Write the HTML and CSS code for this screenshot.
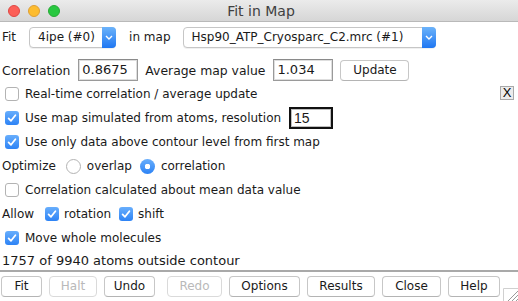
FILE: index.html
```html
<!DOCTYPE html>
<html>
<head>
<meta charset="utf-8">
<link rel="stylesheet" href="styles.css">
</head>
<body>
<div class="window">
  <div class="titlebar">
    <div class="lights">
      <span class="light red"></span>
      <span class="light yellow"></span>
      <span class="light green"></span>
    </div>
    <div class="title">Fit in Map</div>
  </div>

  <div class="content">
    <div class="row r1">
      <span class="lbl">Fit</span>
      <div class="popup p1"><span class="ptext">4ipe (#0)</span><span class="parrow"><svg width="8" height="5" viewBox="0 0 8 5"><polyline points="1,1 4,4 7,1" fill="none" stroke="#fff" stroke-width="1.4"/></svg></span></div>
      <span class="lbl inmap">in map</span>
      <div class="popup p2"><span class="ptext">Hsp90_ATP_Cryosparc_C2.mrc (#1)</span><span class="parrow"><svg width="8" height="5" viewBox="0 0 8 5"><polyline points="1,1 4,4 7,1" fill="none" stroke="#fff" stroke-width="1.4"/></svg></span></div>
    </div>

    <div class="row r2">
      <span class="lbl">Correlation</span>
      <div class="entry e1">0.8675</div>
      <span class="lbl avg">Average map value</span>
      <div class="entry e2">1.034</div>
      <div class="btn upd">Update</div>
    </div>

    <div class="row">
      <span class="cb"></span><span class="cbl">Real-time correlation / average update</span>
      <span class="xbtn">X</span>
    </div>

    <div class="row">
      <span class="cb on"><svg width="14" height="14" viewBox="0 0 14 14"><path d="M3.6 7.4 L6 9.8 L10.4 4.2" fill="none" stroke="#fff" stroke-width="1.8" stroke-linecap="round" stroke-linejoin="round"/></svg></span><span class="cbl">Use map simulated from atoms, resolution</span>
      <div class="entry e3">15</div>
    </div>

    <div class="row">
      <span class="cb on"><svg width="14" height="14" viewBox="0 0 14 14"><path d="M3.6 7.4 L6 9.8 L10.4 4.2" fill="none" stroke="#fff" stroke-width="1.8" stroke-linecap="round" stroke-linejoin="round"/></svg></span><span class="cbl">Use only data above contour level from first map</span>
    </div>

    <div class="row">
      <span class="lbl">Optimize</span>
      <span class="radio r-a"></span><span class="rl">overlap</span>
      <span class="radio on r-b"></span><span class="rl">correlation</span>
    </div>

    <div class="row">
      <span class="cb"></span><span class="cbl">Correlation calculated about mean data value</span>
    </div>

    <div class="row">
      <span class="lbl">Allow</span>
      <span class="cb on cb-rot"><svg width="14" height="14" viewBox="0 0 14 14"><path d="M3.6 7.4 L6 9.8 L10.4 4.2" fill="none" stroke="#fff" stroke-width="1.8" stroke-linecap="round" stroke-linejoin="round"/></svg></span><span class="cbl small">rotation</span>
      <span class="cb on cb-shift"><svg width="14" height="14" viewBox="0 0 14 14"><path d="M3.6 7.4 L6 9.8 L10.4 4.2" fill="none" stroke="#fff" stroke-width="1.8" stroke-linecap="round" stroke-linejoin="round"/></svg></span><span class="cbl small">shift</span>
    </div>

    <div class="row">
      <span class="cb on"><svg width="14" height="14" viewBox="0 0 14 14"><path d="M3.6 7.4 L6 9.8 L10.4 4.2" fill="none" stroke="#fff" stroke-width="1.8" stroke-linecap="round" stroke-linejoin="round"/></svg></span><span class="cbl">Move whole molecules</span>
    </div>

    <div class="row status">1757 of 9940 atoms outside contour</div>
  </div>

  <div class="sep"></div>

  <div class="buttons">
    <div class="btn b-fit">Fit</div>
    <div class="btn dis b-halt">Halt</div>
    <div class="btn b-undo">Undo</div>
    <div class="btn dis b-redo">Redo</div>
    <div class="btn b-opt">Options</div>
    <div class="btn b-res">Results</div>
    <div class="btn b-close">Close</div>
    <div class="btn b-help">Help</div>
  </div>

  <svg class="grip" width="15" height="13" viewBox="0 0 15 13">
    <path d="M0.5 13 V0.5 H15" fill="none" stroke="#d0d0d0" stroke-width="1"/>
    <path d="M5 13 L15 3 M9 13 L15 7 M13 13 L15 11" fill="none" stroke="#9a9a9a" stroke-width="1"/>
  </svg>
</div>
</body>
</html>
```

FILE: styles.css
```css
html, body {
  margin: 0;
  padding: 0;
  background: #ffffff;
}
.window {
  position: relative;
  width: 518px;
  height: 301px;
  overflow: hidden;
  background: #ffffff;
  font-family: "DejaVu Sans", sans-serif;
  font-size: 12px;
  color: #1a1a1a;
}
.titlebar {
  position: relative;
  height: 21px;
  border-bottom: 1px solid #b9b9b9;
  background: linear-gradient(#ebebeb, #d6d6d6);
  display: flex;
  align-items: center;
  justify-content: center;
}
.lights {
  position: absolute;
  left: 8px;
  top: 5px;
  display: flex;
  gap: 8px;
}
.light {
  box-sizing: border-box;
  width: 12px;
  height: 12px;
  border-radius: 50%;
  display: block;
}
.red { background: #fc5f57; border: 0.5px solid #df4744; }
.yellow { background: #fdbc2e; border: 0.5px solid #de9f34; }
.green { background: #28c840; border: 0.5px solid #27aa35; }
.title {
  font-size: 14px;
  color: #404040;
  margin-left: 4px;
}
.content {
  padding-left: 2px;
  padding-right: 4px;
}
.row {
  display: flex;
  align-items: center;
  height: 24px;
  white-space: nowrap;
}
.r1 { height: 30px; }
.r2 { margin-top: 6px; font-size: 12.4px; }
.lbl { display: block; }
.popup {
  display: flex;
  align-items: stretch;
  height: 19px;
  border: 1px solid #c6c6c6;
  border-radius: 4px;
  background: #fff;
  box-shadow: 0 1px 0 rgba(0,0,0,0.06);
}
.p1 { margin-left: 13px; width: 85px; }
.p2 { margin-left: 12px; width: 251px; }
.inmap { margin-left: 13px; }
.ptext {
  flex: 1;
  padding-left: 8px;
  line-height: 19px;
  overflow: hidden;
}
.parrow {
  width: 14px;
  margin: -1px -1px -1px 0;
  border-radius: 0 4px 4px 0;
  background: linear-gradient(#6cb3fa, #1f77f2);
  display: flex;
  align-items: center;
  justify-content: center;
}
.entry {
  box-sizing: border-box;
  height: 22px;
  border: 1px solid #9a9a9a;
  border-top-color: #8a8a8a;
  box-shadow: inset 0 0 0 1px #dedede;
  background: #fff;
  font-size: 13px;
  line-height: 20px;
  padding-left: 3px;
}
.e1 { margin-left: 8px; width: 60px; }
.avg { margin-left: 7px; }
.e2 { margin-left: 8px; width: 60px; }
.e3 {
  margin-left: 8px;
  width: 44px;
  border: 2px solid #111;
  box-shadow: inset 0 0 0 1px #bdbdbd;
  font-family: "Liberation Sans", sans-serif;
  font-size: 14px;
  line-height: 18px;
  padding-left: 3px;
}
.btn {
  box-sizing: border-box;
  height: 21px;
  border: 1px solid #c7c7c7;
  border-bottom-color: #b4b4b4;
  border-radius: 4px;
  background: #fff;
  text-align: center;
  line-height: 19px;
  font-size: 12px;
  color: #1a1a1a;
}
.upd { margin-left: 7px; width: 69px; }
.cb {
  box-sizing: border-box;
  width: 14px;
  height: 14px;
  border: 1px solid #b3b3b3;
  border-radius: 3px;
  background: #fff;
  margin-left: 3px;
  display: block;
  flex: none;
}
.cb.on {
  border: none;
  background: linear-gradient(#68aefc, #2d83f5);
}
.cb svg { display: block; }
.cbl { margin-left: 6px; }
.cb-rot { margin-left: 11px; }
.cb-shift { margin-left: 8px; }
.cbl.small { margin-left: 5px; }
.xbtn {
  margin-left: auto;
  margin-top: -2px;
  box-sizing: border-box;
  width: 14px;
  height: 14px;
  border: 1px solid #a9a9a9;
  background: #ececec;
  font-family: "Liberation Sans", sans-serif;
  font-size: 13px;
  line-height: 12px;
  text-align: center;
  color: #000;
}
.radio {
  box-sizing: border-box;
  width: 15px;
  height: 15px;
  border-radius: 50%;
  border: 1px solid #b3b3b3;
  background: #fff;
  display: block;
  flex: none;
}
.radio.on {
  border: none;
  background: radial-gradient(circle, #fff 0 2.6px, transparent 3px), linear-gradient(#68aefc, #2d83f5);
}
.r-a { margin-left: 10px; }
.r-b { margin-left: 8px; }
.rl { margin-left: 6px; }
.status {
  height: 20px;
  font-size: 13px;
}
.sep {
  height: 2px;
  background: #a9a9a9;
}
.buttons {
  display: flex;
  gap: 7px;
  padding-left: 1px;
  padding-top: 4px;
}
.dis {
  color: #b9b9b9;
  border-color: #dadada;
}
.b-fit { width: 41px; }
.b-halt { width: 48px; }
.b-undo { width: 51px; }
.b-redo { width: 55px; margin-left: 5px; }
.b-opt { width: 71px; }
.b-res { width: 68px; }
.b-close { width: 59px; }
.b-help { width: 52px; }
.grip {
  position: absolute;
  right: 0;
  bottom: 0;
}
```
